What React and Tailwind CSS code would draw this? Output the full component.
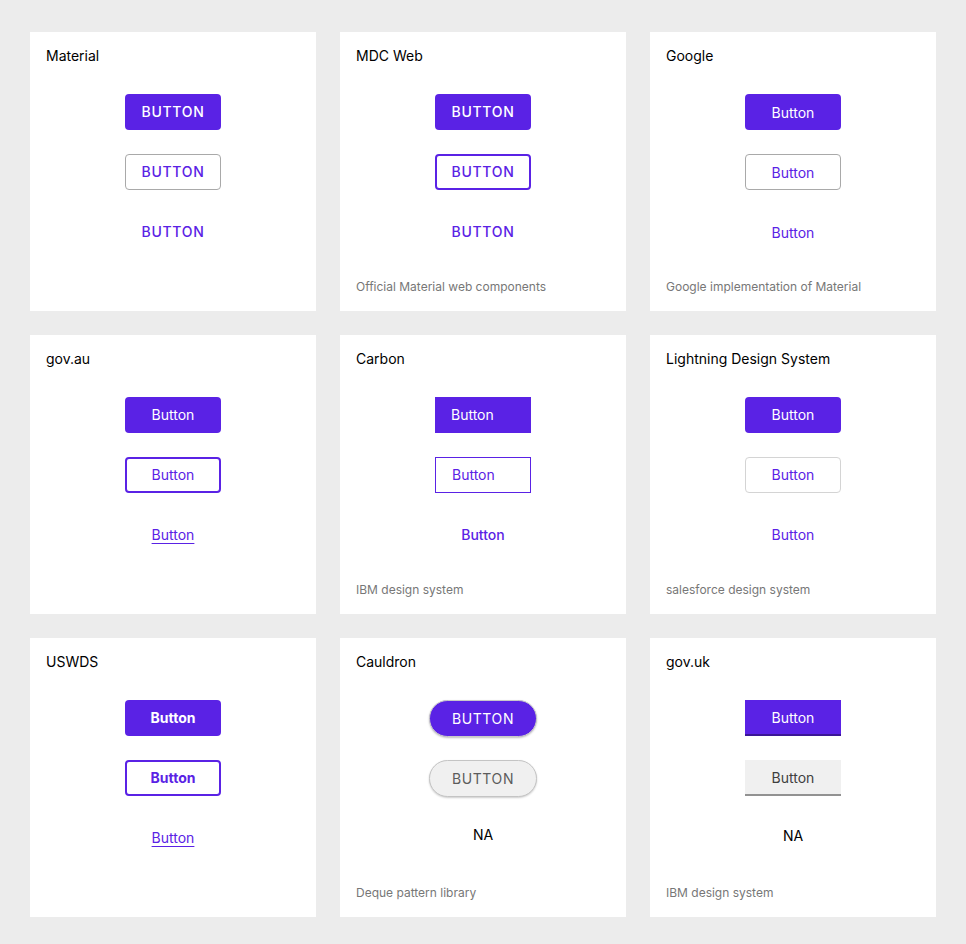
const purple = "bg-[#5a22e5]";

const base =
  "w-24 h-9 flex items-center justify-center text-sm leading-none";

const cards = [
  {
    title: "Material",
    note: "",
    buttons: [
      <div key="a" className={`${base} ${purple} rounded text-white font-medium tracking-[0.7px]`}>BUTTON</div>,
      <div key="b" className={`${base} rounded border border-[#a9a9a9] text-[#5a22e5] font-medium tracking-[0.7px]`}>BUTTON</div>,
      <div key="c" className={`${base} text-[#5a22e5] font-medium tracking-[0.7px]`}>BUTTON</div>,
    ],
  },
  {
    title: "MDC Web",
    note: "Official Material web components",
    buttons: [
      <div key="a" className={`${base} ${purple} rounded text-white font-medium tracking-[0.7px]`}>BUTTON</div>,
      <div key="b" className={`${base} rounded border-2 border-[#5a22e5] text-[#5a22e5] font-medium tracking-[0.7px]`}>BUTTON</div>,
      <div key="c" className={`${base} text-[#5a22e5] font-medium tracking-[0.7px]`}>BUTTON</div>,
    ],
  },
  {
    title: "Google",
    note: "Google implementation of Material",
    buttons: [
      <div key="a" className={`${base} ${purple} rounded text-white pt-px`}>Button</div>,
      <div key="b" className={`${base} rounded border border-[#a9a9a9] text-[#5a22e5] pt-px`}>Button</div>,
      <div key="c" className={`${base} text-[#5a22e5] pt-px`}>Button</div>,
    ],
  },
  {
    title: "gov.au",
    note: "",
    buttons: [
      <div key="a" className={`${base} ${purple} rounded text-white`}>Button</div>,
      <div key="b" className={`${base} rounded border-2 border-[#5a22e5] text-[#5a22e5]`}>Button</div>,
      <div key="c" className={`${base} text-[#5a22e5]`}>
        <span className="underline underline-offset-[3px] decoration-1">Button</span>
      </div>,
    ],
  },
  {
    title: "Carbon",
    note: "IBM design system",
    buttons: [
      <div key="a" className={`w-24 h-9 flex items-center px-4 text-sm leading-none ${purple} text-white`}>Button</div>,
      <div key="b" className="w-24 h-9 flex items-center px-4 text-sm leading-none border border-[#5a22e5] text-[#5a22e5]">Button</div>,
      <div key="c" className={`${base} text-[#5a22e5] font-medium`}>Button</div>,
    ],
  },
  {
    title: "Lightning Design System",
    note: "salesforce design system",
    buttons: [
      <div key="a" className={`${base} ${purple} rounded text-white`}>Button</div>,
      <div key="b" className={`${base} rounded border border-[#d4d4d4] text-[#5a22e5]`}>Button</div>,
      <div key="c" className={`${base} text-[#5a22e5]`}>Button</div>,
    ],
  },
  {
    title: "USWDS",
    note: "",
    buttons: [
      <div key="a" className={`${base} ${purple} rounded text-white font-bold`}>Button</div>,
      <div key="b" className={`${base} rounded border-2 border-[#5a22e5] text-[#5a22e5] font-bold`}>Button</div>,
      <div key="c" className={`${base} text-[#5a22e5]`}>
        <span className="underline underline-offset-[3px] decoration-1">Button</span>
      </div>,
    ],
  },
  {
    title: "Cauldron",
    note: "Deque pattern library",
    gap: "gap-[23px]",
    buttons: [
      <div key="a" className={`w-[108px] h-[37px] flex items-center justify-center text-sm leading-none tracking-[0.6px] rounded-full ${purple} text-white border border-[#c9c9c9] shadow-[0_1px_2px_rgba(0,0,0,0.25)]`}>BUTTON</div>,
      <div key="b" className="w-[108px] h-[37px] flex items-center justify-center text-sm leading-none tracking-[0.6px] rounded-full bg-[#f0f0f0] text-[#5c5c5c] border border-[#c4c4c4] shadow-[0_1px_2px_rgba(0,0,0,0.2)]">BUTTON</div>,
      <div key="c" className={`${base} text-black -mt-[3px]`}>NA</div>,
    ],
  },
  {
    title: "gov.uk",
    note: "IBM design system",
    buttons: [
      <div key="a" className={`${base} ${purple} text-white border-b-2 border-[#3b1696] pt-0.5`}>Button</div>,
      <div key="b" className={`${base} bg-[#f0f0f0] text-[#3f3f3f] border-b-2 border-[#929292] pt-0.5`}>Button</div>,
      <div key="c" className={`${base} text-black -mt-0.5`}>NA</div>,
    ],
  },
];

const Card = ({ title, note, buttons, gap = "gap-6" }) => (
  <div className="bg-white h-[279px] flex flex-col px-4 pt-[14px] pb-[14px]">
    <div className="text-sm leading-5 text-black">{title}</div>
    <div className={`mt-7 flex flex-col items-center ${gap}`}>{buttons}</div>
    <div className="mt-auto text-xs leading-5 text-[#777]">{note}</div>
  </div>
);

export default function App() {
  return (
    <div
      className="min-h-screen bg-[#ececec] px-[30px] pt-8 pb-[27px]"
      style={{ fontFamily: "Inter, 'Noto Sans', sans-serif" }}
    >
      <div className="grid grid-cols-3 gap-6">
        {cards.map((c) => (
          <Card key={c.title} {...c} />
        ))}
      </div>
    </div>
  );
}
